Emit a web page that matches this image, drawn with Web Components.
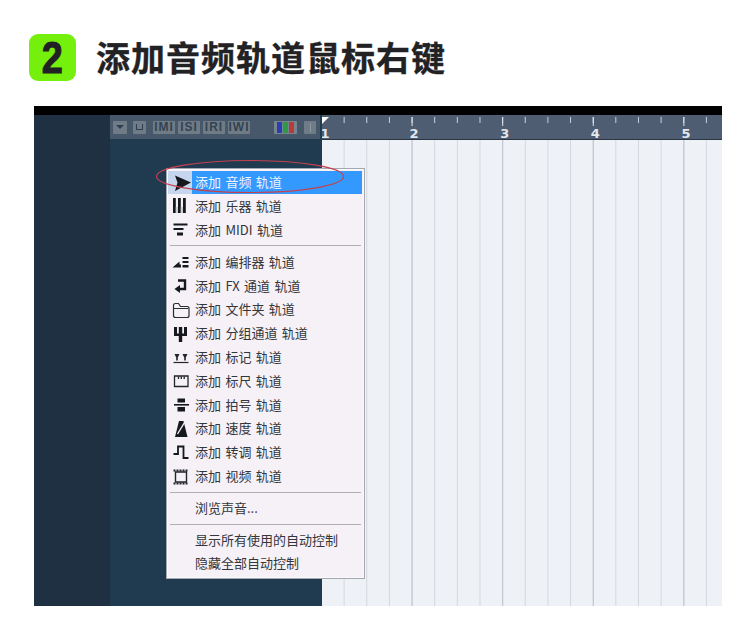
<!DOCTYPE html>
<html lang="zh">
<head>
<meta charset="utf-8">
<title>添加音频轨道鼠标右键</title>
<style>
  html, body { margin: 0; background: #fff; }
  body { font-family: "Noto Sans CJK SC", "Liberation Sans", sans-serif; }
</style>
</head>
<body>
<step-heading number="2">添加音频轨道鼠标右键</step-heading>
<daw-window>
  <track-toolbar slot="toolbar"></track-toolbar>
  <bar-ruler slot="ruler"></bar-ruler>
  <context-menu slot="menu">
    <menu-item icon="audio" active>添加 音频 轨道</menu-item>
    <menu-item icon="piano">添加 乐器 轨道</menu-item>
    <menu-item icon="midi">添加 MIDI 轨道</menu-item>
    <menu-sep></menu-sep>
    <menu-item icon="arranger">添加 编排器 轨道</menu-item>
    <menu-item icon="fx">添加 FX 通道 轨道</menu-item>
    <menu-item icon="folder">添加 文件夹 轨道</menu-item>
    <menu-item icon="group">添加 分组通道 轨道</menu-item>
    <menu-item icon="marker">添加 标记 轨道</menu-item>
    <menu-item icon="ruler">添加 标尺 轨道</menu-item>
    <menu-item icon="signature">添加 拍号 轨道</menu-item>
    <menu-item icon="tempo">添加 速度 轨道</menu-item>
    <menu-item icon="transpose">添加 转调 轨道</menu-item>
    <menu-item icon="video">添加 视频 轨道</menu-item>
    <menu-sep></menu-sep>
    <menu-item>浏览声音...</menu-item>
    <menu-sep tight></menu-sep>
    <menu-item>显示所有使用的自动控制</menu-item>
    <menu-item>隐藏全部自动控制</menu-item>
  </context-menu>
</daw-window>

<script>
// icons are drawn on a 20x20 box whose left edge sits at x=171 on the page
const ICONS = {
  audio: `<path d="M4 2.5 L20 9.5 L4 18 L6.5 9.5Z" fill="#15181c"/>`,
  piano: `<path d="M2 2h2.8v15H2zM7 2h2.8v15H7zM12 2h2.8v15H12z" fill="#15181c"/><path d="M4.8 11h2.2v6H4.8zM9.8 11h2.2v6H9.8z" fill="#cfcfcf"/>`,
  midi: `<path d="M2.5 3.5h14v2h-14zM2.5 8h10v2h-10zM6 12.5h6v3H6z" fill="#15181c"/>`,
  arranger: `<path d="M1.5 15.5 L8.5 9.5 V12.5 H10 V15.5Z M11.5 5h6v2h-6zM11.5 9h6v2h-6zM11.5 13h6v2.5h-6z" fill="#15181c"/>`,
  fx: `<path d="M7 4.5h7v8.5H8" fill="none" stroke="#15181c" stroke-width="2.4"/><path d="M9 9 L3.5 13 L9 17Z" fill="#15181c"/>`,
  folder: `<path d="M2.5 15.5q0 2 2 2H16q2 0 2-2V8.5q0-2-2-2H9.5L7.5 3.5H4.5q-2 0-2 2Z" fill="none" stroke="#2a2d31" stroke-width="1.2"/><path d="M3 8.5H17" stroke="#2a2d31" stroke-width="1"/>`,
  group: `<path d="M3 3h3v6.5h1.8V3h3.4v6.5H13V3h3v9h-4.8v6H7.8v-6H3z" fill="#15181c"/>`,
  marker: `<path d="M3.5 6h5L6.8 9.5v3H5.2v-3zM11.5 6h5L14.8 9.5v3h-1.6v-3z" fill="#22252a"/><path d="M2.5 14.5h15" stroke="#22252a" stroke-width="1.2"/>`,
  ruler: `<path d="M3.5 5h13.5v10.5H3.5z" fill="none" stroke="#22252a" stroke-width="1.3"/><path d="M7.5 5.5v2.5M10.3 5.5v2.5M13.2 5.5v2.5" stroke="#22252a" stroke-width="1.3"/>`,
  signature: `<path d="M6.5 3.5h7.5v4H6.5zM6.5 12h7.5v4.5H6.5z" fill="#15181c"/><path d="M3 9.8h15" stroke="#15181c" stroke-width="1.6"/>`,
  tempo: `<path d="M8 2h4.5L16.5 18H4Z" fill="#15181c"/><path d="M6.5 15 L13.5 3.5" stroke="#f6f1f7" stroke-width="1.4"/>`,
  transpose: `<path d="M2.5 11h4.5V3.5h5.5V15h5" fill="none" stroke="#15181c" stroke-width="1.8"/>`,
  video: `<path d="M4.5 5h11v10h-11z" fill="none" stroke="#22252a" stroke-width="1.4"/><path d="M2.5 3.5h15M2.5 16.5h15" stroke="#22252a" stroke-width="2.2" stroke-dasharray="2 1"/>`
};

class StepHeading extends HTMLElement {
  constructor() {
    super()
    this.attachShadow({ mode: "open" }).innerHTML = `
      <style>
        :host { display: flex; align-items: center; gap: 20px; padding: 34px 0 25px 29px; height: 47px; }
        .badge {
          width: 47px; height: 47px; border-radius: 9px; background: #74f00c;
          display: flex; align-items: center; justify-content: center;
          font: 700 44px/47px "Liberation Sans", sans-serif; color: #222225;
        }
        .badge span { display: block; transform: scaleX(.86); -webkit-text-stroke: 1.1px #222225; }
        h1 {
          margin: -2px 0 0; font: 700 34px/47px "Noto Sans CJK SC", sans-serif;
          letter-spacing: 1px; color: #222225; -webkit-text-stroke: .35px #222225;
        }
      </style>
      <div class="badge"><span></span></div>
      <h1><slot></slot></h1>`
    this.shadowRoot.querySelector("span").textContent = this.getAttribute("number")
  }
}

class DawWindow extends HTMLElement {
  constructor() {
    super()
    this.attachShadow({ mode: "open" }).innerHTML = `
      <style>
        :host {
          display: grid; position: relative; width: 688px; height: 500px; margin-left: 34px;
          grid-template: 9px 25px 1fr / 76px 212px 1fr; background: #203a50;
        }
        .top { grid-column: 1 / -1; background: #000; }
        .side { grid-row: 2 / 4; background: #1f3043; }
        .tracks { background: #203a50; }
        .lanes {
          background-color: #eef1f6;
          background-image:
            linear-gradient(90deg, #bfc3ca 0 1.4px, transparent 1.4px),
            linear-gradient(90deg, #d4d8de 0 1.4px, transparent 1.4px);
          background-size: 90.6px 100%, 22.65px 100%;
          background-position: -1px 0, -1px 0;
        }
        svg { position: absolute; left: 122px; top: 54px; overflow: visible; }
        ::slotted([slot="menu"]) { position: absolute; left: 132px; top: 62px; }
      </style>
      <div class="top"></div>
      <div class="side"></div>
      <slot name="toolbar"></slot>
      <slot name="ruler"></slot>
      <div class="tracks"></div>
      <div class="lanes"></div>
      <slot name="menu"></slot>
      <svg width="188" height="33" viewBox="0 0 188 33"><ellipse cx="94" cy="16.5" rx="93.5" ry="16" fill="none" stroke="#c4414f" stroke-width="1.2"/></svg>`
  }
}

class TrackToolbar extends HTMLElement {
  constructor() {
    super()
    this.attachShadow({ mode: "open" }).innerHTML = `
      <style>
        :host { display: flex; align-items: center; height: 24px; margin-right: 2px; background: #47586a; padding-left: 3px; }
        div {
          height: 13px; background: #6f7c88; border-radius: 1px; color: #34434f;
          display: flex; align-items: center; justify-content: center;
          font: 700 12px/13px "Liberation Sans", sans-serif; letter-spacing: 1px;
        }
        .drop { width: 14px; }
        .drop::after { content: ""; border: 4px solid transparent; border-top: 4px solid #2f3e4c; border-bottom: 0; }
        .small { width: 13px; margin-left: 6px; }
        .small::after { content: ""; width: 5px; height: 5px; border: 1px solid #2f3e4c; border-top: 0; }
        .mode { width: 22px; margin-left: 3px; }
        .first { margin-left: 7px; }
        .colors { width: 23px; margin-left: 24px; gap: 1px; background: #77858f; }
        .colors i { width: 5px; height: 11px; }
        .info { width: 12px; margin-left: 7px; }
        .info::after { content: ""; width: 1px; height: 9px; background: #8b98a3; }
      </style>
      <div class="drop"></div>
      <div class="small"></div>
      <div class="mode first">IMI</div>
      <div class="mode">ISI</div>
      <div class="mode">IRI</div>
      <div class="mode">IWI</div>
      <div class="colors"><i style="background:#2b3fb0"></i><i style="background:#2f9a44"></i><i style="background:#b83a3a"></i></div>
      <div class="info"></div>`
  }
}

class BarRuler extends HTMLElement {
  constructor() {
    super()
    const bars = [1, 2, 3, 4, 5].map(n => `<span>${n}</span>`).join("")
    this.attachShadow({ mode: "open" }).innerHTML = `
      <style>
        :host {
          display: flex; position: relative; overflow: hidden;
          border-bottom: 1px solid #2b3644; box-sizing: border-box; height: 25px;
          background-color: #4f5d72;
          background-image:
            linear-gradient(90deg, #e4e8ee 0 1.4px, transparent 1.4px),
            linear-gradient(90deg, #c9d0da 0 1.2px, transparent 1.2px);
          background-size: 90.6px 9px, 22.65px 6px;
          background-position: -1px 2px, -1px 2px;
          background-repeat: repeat-x;
        }
        :host::before {
          content: ""; position: absolute; left: 0; top: 2px;
          border-top: 7px solid #fff; border-right: 7px solid transparent;
        }
        span {
          flex: 0 0 90.6px; box-sizing: border-box; padding: 12px 0 0 0;
          font: 700 13px/13px "DejaVu Sans", sans-serif; color: #e2e7ee;
        }
        span:first-of-type { flex-basis: 89.1px; margin-left: -1.5px; }
      </style>${bars}`
  }
}

class ContextMenu extends HTMLElement {
  constructor() {
    super()
    this.attachShadow({ mode: "open" }).innerHTML = `
      <style>
        :host {
          display: block; box-sizing: border-box; width: 199px; height: 411px; padding: 2px 2px 0 1px;
          background: #f6f1f7; border: 1px solid #a3a8ae; box-shadow: inset 0 0 0 1px #fbf9fc;
          font: 13px/21.5px "Noto Sans CJK SC", sans-serif; color: #33363a;
        }
      </style>
      <slot></slot>`
  }
}

class MenuItem extends HTMLElement {
  constructor() {
    super()
    const icon = ICONS[this.getAttribute("icon")] || ""
    this.attachShadow({ mode: "open" }).innerHTML = `
      <style>
        :host { display: flex; height: 23.8px; word-spacing: 1.5px; white-space: nowrap; }
        .icon { flex: 0 0 24px; height: 23px; display: flex; align-items: center; padding-left: 3px; box-sizing: border-box; }
        .label { flex: 1; height: 23px; padding-left: 3px; }
        :host([active]) .icon { background: #c6d6ee; }
        :host([active]) .label { background: #3399ff; color: #eaf4ff; }
      </style>
      <div class="icon"><svg width="20" height="20" viewBox="0 0 20 20">${icon}</svg></div>
      <div class="label"><slot></slot></div>`
  }
}

class MenuSep extends HTMLElement {
  constructor() {
    super()
    this.attachShadow({ mode: "open" }).innerHTML = `
      <style>
        :host { display: block; height: 1px; margin: 3px 1.5px 4.5px 2px; background: #b0adb2; }
        :host([tight]) { margin-bottom: 3.5px; }
      </style>`
  }
}

customElements.define("step-heading", StepHeading)
customElements.define("daw-window", DawWindow)
customElements.define("track-toolbar", TrackToolbar)
customElements.define("bar-ruler", BarRuler)
customElements.define("context-menu", ContextMenu)
customElements.define("menu-item", MenuItem)
customElements.define("menu-sep", MenuSep)
</script>
</body>
</html>
